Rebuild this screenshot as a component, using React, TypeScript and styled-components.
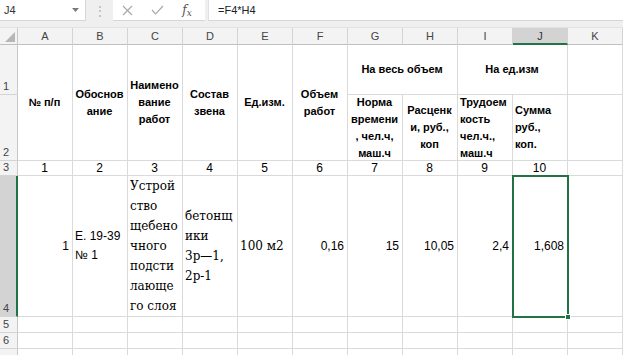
import React from "react";
import styled, { createGlobalStyle, css } from "styled-components";

const SANS = `"Liberation Sans", Arial, sans-serif`;
const SERIF = `"DejaVu Serif", "Liberation Serif", serif`;
const GREEN = "#217346";
const GRID = "#dadada";

const GlobalStyle = createGlobalStyle`
  html, body { margin: 0; padding: 0; background: #fff; overflow: hidden; }
  #root { width: 623px; height: 355px; overflow: hidden; }
  * { box-sizing: border-box; }
`;

const Window = styled.div`
  width: 623px;
  height: 355px;
  display: flex;
  flex-direction: column;
  overflow: hidden;
  background: #fff;
  font-family: ${SANS};
`;

const Toolbar = styled.div`
  flex-shrink: 0;
  display: flex;
  height: 28px;
  padding-bottom: 6px;
  background: #efefef;
  border-bottom: 1px solid #e2e2e2;
`;

const NameBox = styled.div`
  width: 86px;
  display: flex;
  align-items: center;
  justify-content: space-between;
  padding: 0 6px 0 4px;
  background: #fff;
  border-right: 1px solid #d6d6d6;
  border-bottom: 1px solid #d6d6d6;
  font-size: 11px;
  color: #333;
`;

const Grip = styled.div`
  width: 27px;
  display: flex;
  align-items: center;
  justify-content: center;
  color: #b0b0b0;
  font-size: 12px;
`;

const FxBox = styled.div`
  width: 92px;
  display: flex;
  align-items: center;
  gap: 6px;
  padding-left: 2px;
  background: #fff;
  border-bottom: 1px solid #d6d6d6;
`;

const IconSlot = styled.div`
  width: 24px;
  height: 100%;
  display: flex;
  align-items: center;
  justify-content: center;
`;

const FxText = styled.span`
  font-family: ${SERIF};
  font-style: italic;
  font-size: 12px;
  color: #555;
  sub {
    font-size: 9px;
    vertical-align: -2px;
  }
`;

const FormulaInput = styled.div`
  flex: 1;
  margin-left: 3px;
  display: flex;
  align-items: center;
  padding-left: 9px;
  background: #fff;
  border-bottom: 1px solid #d6d6d6;
  border-left: 1px solid #e0e0e0;
  font-size: 11px;
  color: #222;
`;

const Sheet = styled.div`
  flex-shrink: 0;
  display: grid;
  grid-template-columns: 18px repeat(11, 55px);
  grid-template-rows: 17px 50px 66px 15px 141px 16px 16px 16px 16px;
`;

const Corner = styled.div`
  grid-column: 1;
  grid-row: 1;
  background: #f3f3f3;
  border-right: 1px solid #c8c8c8;
  border-bottom: 1px solid #c0c0c0;
  display: flex;
`;

const ColHead = styled.div<{ $active?: boolean }>`
  grid-row: 1;
  display: flex;
  align-items: center;
  justify-content: center;
  font-size: 11px;
  color: #444;
  background: #f3f3f3;
  border-right: 1px solid #d4d4d4;
  border-bottom: 1px solid #c0c0c0;
  ${(p) =>
    p.$active &&
    css`
      background: #d3d3d3;
      border-bottom: 2px solid ${GREEN};
      color: #333;
    `}
`;

const RowHead = styled.div<{ $active?: boolean }>`
  grid-column: 1;
  display: flex;
  flex-direction: column;
  justify-content: flex-end;
  padding-left: 3px;
  font-size: 11px;
  line-height: 15px;
  color: #444;
  background: #f3f3f3;
  border-right: 1px solid #c8c8c8;
  border-bottom: 1px solid #d4d4d4;
  ${(p) =>
    p.$active &&
    css`
      background: #d3d3d3;
      border-right: 2px solid ${GREEN};
    `}
`;

type Align = "left" | "center" | "right";
type Kind = "head" | "plain" | "serif";

const Cell = styled.div<{
  $c: number;
  $r: number;
  $cs: number;
  $rs: number;
  $h: Align;
  $kind: Kind;
  $selected?: boolean;
}>`
  grid-column: ${(p) => p.$c} / span ${(p) => p.$cs};
  grid-row: ${(p) => p.$r} / span ${(p) => p.$rs};
  position: relative;
  display: flex;
  flex-direction: column;
  justify-content: center;
  align-items: ${(p) =>
    p.$h === "left" ? "flex-start" : p.$h === "right" ? "flex-end" : "center"};
  text-align: ${(p) => p.$h};
  padding: 0 3px 0 2px;
  border-right: 1px solid ${GRID};
  border-bottom: 1px solid ${GRID};
  white-space: nowrap;
  color: #000;
  ${(p) =>
    p.$kind === "head"
      ? css`
          font-family: ${SANS};
          font-weight: bold;
          font-size: 11px;
          line-height: 17px;
        `
      : p.$kind === "serif"
      ? css`
          font-family: ${SERIF};
          font-size: 12px;
          line-height: 20px;
        `
      : css`
          font-family: ${SANS};
          font-size: 12px;
          line-height: 19px;
        `}
  ${(p) =>
    p.$selected &&
    css`
      z-index: 2;
      outline: 2px solid ${GREEN};
      outline-offset: -1px;
    `}
`;

const Handle = styled.span`
  position: absolute;
  right: -4px;
  bottom: -4px;
  width: 6px;
  height: 6px;
  background: ${GREEN};
  border: 1px solid #fff;
`;

interface CellDef {
  c: number;
  r: number;
  cs?: number;
  rs?: number;
  lines: string[];
  h: Align;
  kind: Kind;
  selected?: boolean;
}

const COLS = ["A", "B", "C", "D", "E", "F", "G", "H", "I", "J", "K"];
const ROWS = [1, 2, 3, 4, 5, 6, 7, 8];

const content: CellDef[] = [
  { c: 0, r: 1, rs: 2, lines: ["№ п/п"], h: "center", kind: "head" },
  { c: 1, r: 1, rs: 2, lines: ["Обоснов", "ание"], h: "center", kind: "head" },
  { c: 2, r: 1, rs: 2, lines: ["Наимено", "вание", "работ"], h: "center", kind: "head" },
  { c: 3, r: 1, rs: 2, lines: ["Состав", "звена"], h: "center", kind: "head" },
  { c: 4, r: 1, rs: 2, lines: ["Ед.изм."], h: "center", kind: "head" },
  { c: 5, r: 1, rs: 2, lines: ["Объем", "работ"], h: "center", kind: "head" },
  { c: 6, r: 1, cs: 2, lines: ["На весь объем"], h: "center", kind: "head" },
  { c: 8, r: 1, cs: 2, lines: ["На ед.изм"], h: "center", kind: "head" },
  { c: 6, r: 2, lines: ["Норма", "времени", ", чел.ч,", "маш.ч"], h: "center", kind: "head" },
  { c: 7, r: 2, lines: ["Расценк", "и, руб.,", "коп"], h: "center", kind: "head" },
  { c: 8, r: 2, lines: ["Трудоем", "кость", "чел.ч.,", "маш.ч"], h: "left", kind: "head" },
  { c: 9, r: 2, lines: ["Сумма", "руб.,", "коп."], h: "left", kind: "head" },
  ...Array.from({ length: 10 }, (_, i) => ({
    c: i,
    r: 3,
    lines: [String(i + 1)],
    h: "center" as Align,
    kind: "plain" as Kind,
  })),
  { c: 0, r: 4, lines: ["1"], h: "right", kind: "plain" },
  { c: 1, r: 4, lines: ["Е. 19-39", "№ 1"], h: "left", kind: "plain" },
  {
    c: 2,
    r: 4,
    lines: ["Устрой", "ство", "щебено", "чного", "подсти", "лающе", "го слоя"],
    h: "left",
    kind: "serif",
  },
  { c: 3, r: 4, lines: ["бетонщ", "ики", "3р—1,", "2р-1"], h: "left", kind: "serif" },
  { c: 4, r: 4, lines: ["100 м2"], h: "left", kind: "serif" },
  { c: 5, r: 4, lines: ["0,16"], h: "right", kind: "plain" },
  { c: 6, r: 4, lines: ["15"], h: "right", kind: "plain" },
  { c: 7, r: 4, lines: ["10,05"], h: "right", kind: "plain" },
  { c: 8, r: 4, lines: ["2,4"], h: "right", kind: "plain" },
  { c: 9, r: 4, lines: ["1,608"], h: "right", kind: "plain", selected: true },
];

function buildCells(): CellDef[] {
  const covered = new Set<string>();
  content.forEach((d) => {
    for (let dc = 0; dc < (d.cs ?? 1); dc++)
      for (let dr = 0; dr < (d.rs ?? 1); dr++) covered.add(`${d.c + dc}:${d.r + dr}`);
  });
  const empties: CellDef[] = [];
  ROWS.forEach((r) =>
    COLS.forEach((_, c) => {
      if (!covered.has(`${c}:${r}`)) empties.push({ c, r, lines: [], h: "left", kind: "plain" });
    })
  );
  return [...content, ...empties];
}

const CloseIcon = () => (
  <svg width="11" height="11" viewBox="0 0 11 11">
    <path d="M1 1 L10 10 M10 1 L1 10" stroke="#a9a9a9" strokeWidth="1.2" fill="none" />
  </svg>
);

const CheckIcon = () => (
  <svg width="13" height="10" viewBox="0 0 13 10">
    <path d="M1 5 L4.6 8.8 L12 1" stroke="#a9a9a9" strokeWidth="1.2" fill="none" />
  </svg>
);

const DropArrow = () => (
  <svg width="7" height="4" viewBox="0 0 7 4">
    <path d="M0 0 L7 0 L3.5 4 Z" fill="#7a7a7a" />
  </svg>
);

const CornerTriangle = () => (
  <svg width="17" height="16" viewBox="0 0 17 16">
    <polygon points="5,14 15,14 15,4" fill="#b6b6b6" />
  </svg>
);

export default function App() {
  const cells = buildCells();
  return (
    <Window>
      <GlobalStyle />
      <Toolbar>
        <NameBox>
          <span>J4</span>
          <DropArrow />
        </NameBox>
        <Grip>⋮</Grip>
        <FxBox>
          <IconSlot>
            <CloseIcon />
          </IconSlot>
          <IconSlot>
            <CheckIcon />
          </IconSlot>
          <IconSlot>
            <FxText>
              f<sub>x</sub>
            </FxText>
          </IconSlot>
        </FxBox>
        <FormulaInput>=F4*H4</FormulaInput>
      </Toolbar>
      <Sheet>
        <Corner>
          <CornerTriangle />
        </Corner>
        {COLS.map((col, i) => (
          <ColHead key={col} style={{ gridColumn: i + 2 }} $active={col === "J"}>
            {col}
          </ColHead>
        ))}
        {ROWS.map((r) => (
          <RowHead key={r} style={{ gridRow: r + 1 }} $active={r === 4}>
            {r <= 6 ? r : ""}
          </RowHead>
        ))}
        {cells.map((d) => (
          <Cell
            key={`${d.c}-${d.r}`}
            $c={d.c + 2}
            $r={d.r + 1}
            $cs={d.cs ?? 1}
            $rs={d.rs ?? 1}
            $h={d.h}
            $kind={d.kind}
            $selected={d.selected}
          >
            {d.lines.map((l, i) => (
              <span key={i}>{l}</span>
            ))}
            {d.selected && <Handle />}
          </Cell>
        ))}
      </Sheet>
    </Window>
  );
}
